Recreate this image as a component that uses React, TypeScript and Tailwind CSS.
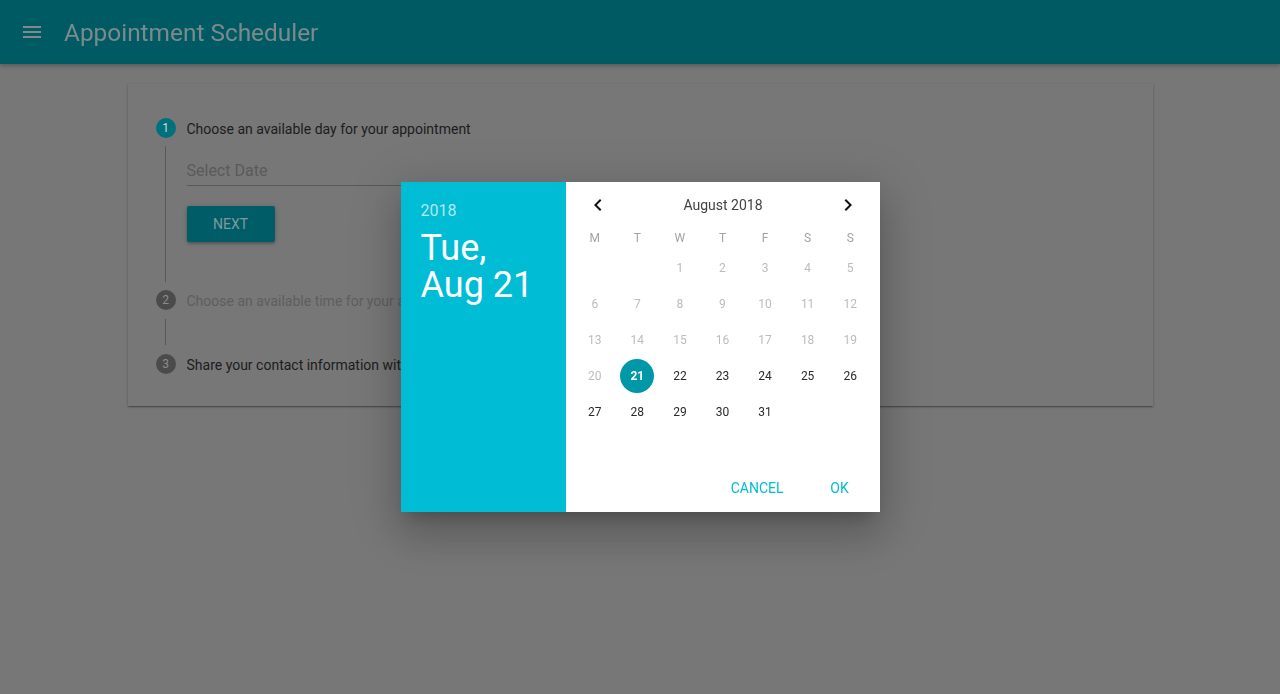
import React from "react";

// ─── Data ─────────────────────────────────────────────────────────────────────

const WEEKDAYS = ["M", "T", "W", "T", "F", "S", "S"];

// August 2018 starts on a Wednesday (two blank cells before day 1)
const CELLS: (number | null)[] = [
  null,
  null,
  ...Array.from({ length: 31 }, (_, i) => i + 1),
];

const SELECTED = 21;
const FIRST_ENABLED = 21;

const rows: (number | null)[][] = [];
for (let i = 0; i < CELLS.length; i += 7) rows.push(CELLS.slice(i, i + 7));

// ─── Icons ────────────────────────────────────────────────────────────────────

const MenuIcon = () => (
  <svg width="24" height="24" viewBox="0 0 24 24" fill="#7d8a8c">
    <path d="M3 18h18v-2H3v2zm0-5h18v-2H3v2zm0-7v2h18V6H3z" />
  </svg>
);

const ChevronLeft = () => (
  <svg width="24" height="24" viewBox="0 0 24 24" fill="#111">
    <path d="M15.41 7.41L14 6l-6 6 6 6 1.41-1.41L10.83 12z" />
  </svg>
);

const ChevronRight = () => (
  <svg width="24" height="24" viewBox="0 0 24 24" fill="#111">
    <path d="M10 6L8.59 7.41 13.17 12l-4.58 4.59L10 18l6-6z" />
  </svg>
);

// ─── Stepper pieces ───────────────────────────────────────────────────────────

const StepHead = ({
  n,
  label,
  active,
  muted,
}: {
  n: number;
  label: string;
  active?: boolean;
  muted?: boolean;
}) => (
  <div className="flex items-center h-5">
    <div
      className={`w-5 h-5 rounded-full flex items-center justify-center text-[12px] ${
        active ? "bg-[#00717c] text-[#c9dadc]" : "bg-[#4b4b4b] text-[#8c8c8c]"
      }`}
    >
      {n}
    </div>
    <span
      className={`ml-[11px] pt-[2px] text-[14px] ${muted ? "text-[#5e5e5e]" : "text-[#1c1c1c]"}`}
    >
      {label}
    </span>
  </div>
);

// ─── Date picker dialog ───────────────────────────────────────────────────────

const DatePickerDialog = () => (
  <div className="fixed inset-0 flex items-center justify-center">
    <div className="flex w-[479px] h-[330px] bg-white shadow-[0_11px_15px_-7px_rgba(0,0,0,0.2),0_24px_38px_3px_rgba(0,0,0,0.14),0_9px_46px_8px_rgba(0,0,0,0.12)]">
      {/* Toolbar */}
      <div className="w-[165px] bg-[#00bcd4] pl-5 pt-[17px]">
        <div className="h-6 text-[16px] leading-6 text-white/70">2018</div>
        <div className="mt-[7px] text-[36px] leading-[37px] text-white">
          Tue,
          <br />
          Aug 21
        </div>
      </div>

      {/* Calendar */}
      <div className="flex-1 flex flex-col">
        <div className="h-[45px] pt-px pl-2 pr-[7px] flex items-center justify-between">
          <button className="w-12 h-10 flex items-center justify-center">
            <ChevronLeft />
          </button>
          <span className="text-[14px] text-[#424242]">August 2018</span>
          <button className="w-12 h-10 flex items-center justify-center">
            <ChevronRight />
          </button>
        </div>

        <div className="px-2 grid grid-cols-7 h-[22px] items-center text-[12px] text-[#a3a3a3] text-center">
          {WEEKDAYS.map((d, i) => (
            <span key={i}>{d}</span>
          ))}
        </div>

        <div className="px-2 mt-px">
          {rows.map((row, r) => (
            <div key={r} className="grid grid-cols-7 h-9">
              {row.map((day, c) => (
                <div key={c} className="flex items-center justify-center">
                  {day === null ? null : day === SELECTED ? (
                    <span className="w-[34px] h-[34px] rounded-full bg-[#0097a7] text-white text-[12px] font-bold flex items-center justify-center">
                      {day}
                    </span>
                  ) : (
                    <span
                      className={`text-[12px] ${
                        day < FIRST_ENABLED ? "text-[#bcbcbc]" : "text-[#2a2a2a]"
                      }`}
                    >
                      {day}
                    </span>
                  )}
                </div>
              ))}
            </div>
          ))}
        </div>

        <div className="mt-auto flex justify-end gap-[8px] p-2 pb-[6px]">
          <button className="h-9 px-4 min-w-16 text-[14px] text-[#00bcd4]">CANCEL</button>
          <button className="h-9 px-4 min-w-16 text-[14px] text-[#00bcd4]">OK</button>
        </div>
      </div>
    </div>
  </div>
);

// ─── App ──────────────────────────────────────────────────────────────────────

export default function App() {
  return (
    <div
      className="relative h-[694px] bg-[#777777] overflow-hidden"
      style={{ fontFamily: "Roboto, 'Liberation Sans', sans-serif" }}
    >
      {/* App bar */}
      <header className="relative z-10 h-16 bg-[#005a64] flex items-center px-5 shadow-[0_2px_4px_rgba(0,0,0,0.25)]">
        <MenuIcon />
        <h1 className="ml-5 pt-[2px] text-[24.4px] text-[#7d8a8c]">Appointment Scheduler</h1>
      </header>

      {/* Stepper card */}
      <main className="pt-5">
        <div className="mx-auto w-[1025px] bg-[#777777] pl-7 pt-[34px] pb-8 shadow-[0_1px_3px_rgba(0,0,0,0.2),0_1px_1px_rgba(0,0,0,0.14),0_2px_1px_-1px_rgba(0,0,0,0.12)]">
          <StepHead n={1} label="Choose an available day for your appointment" active />
          <div className="ml-[9px] my-2 border-l border-[#595959] pl-[21px] pt-2 pb-10">
            <div className="w-[380px] h-8 pt-[2px] border-b border-[#585858] flex items-center">
              <span className="text-[16px] text-[#5a5a5a]">Select Date</span>
            </div>
            <button className="mt-5 h-9 w-[88px] rounded-[2px] bg-[#005d68] text-[14px] text-[#7f9a9e] shadow-[0_1px_5px_rgba(0,0,0,0.2),0_2px_2px_rgba(0,0,0,0.14)]">
              NEXT
            </button>
          </div>
          <StepHead n={2} label="Choose an available time for your appointment" muted />
          <div className="ml-[9px] my-[9px] h-[26px] border-l border-[#595959]" />
          <StepHead n={3} label="Share your contact information with us and we'll send you a reminder" />
        </div>
      </main>

      <DatePickerDialog />
    </div>
  );
}
